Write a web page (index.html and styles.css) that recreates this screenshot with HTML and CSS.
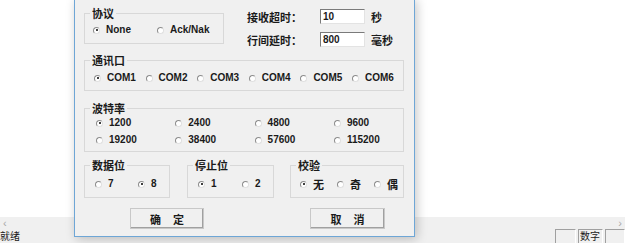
FILE: index.html
```html
<!DOCTYPE html>
<html lang="zh-CN">
<head>
    <meta charset="UTF-8">
    <title>串口设置</title>
    <link rel="stylesheet" href="styles.css">
</head>
<body>
    <div class="window">
        <div class="client"></div>
        <div class="hscroll">
            <span class="arrow">&lsaquo;</span>
            <span class="arrow">&rsaquo;</span>
        </div>
        <div class="statusbar">
            <span class="status-text">就绪</span>
            <div class="panes">
                <span class="pane pane-a"></span>
                <span class="pane pane-b">数字</span>
                <span class="pane pane-c"></span>
            </div>
        </div>

        <div class="dialog">
            <div class="row-top">
                <div class="group g-proto">
                    <div class="group-title">协议</div>
                    <div class="options">
                        <label class="opt"><span class="radio on"></span>None</label>
                        <label class="opt"><span class="radio"></span>Ack/Nak</label>
                    </div>
                </div>
                <div class="timing">
                    <div class="field">
                        <span class="field-label">接收超时：</span>
                        <span class="edit">10</span>
                        <span class="unit">秒</span>
                    </div>
                    <div class="field">
                        <span class="field-label">行间延时：</span>
                        <span class="edit">800</span>
                        <span class="unit">毫秒</span>
                    </div>
                </div>
            </div>

            <div class="group g-port">
                <div class="group-title">通讯口</div>
                <div class="options">
                    <label class="opt"><span class="radio on"></span>COM1</label>
                    <label class="opt"><span class="radio"></span>COM2</label>
                    <label class="opt"><span class="radio"></span>COM3</label>
                    <label class="opt"><span class="radio"></span>COM4</label>
                    <label class="opt"><span class="radio"></span>COM5</label>
                    <label class="opt"><span class="radio"></span>COM6</label>
                </div>
            </div>

            <div class="group g-baud">
                <div class="group-title">波特率</div>
                <div class="options">
                    <label class="opt"><span class="radio on"></span>1200</label>
                    <label class="opt"><span class="radio"></span>2400</label>
                    <label class="opt"><span class="radio"></span>4800</label>
                    <label class="opt"><span class="radio"></span>9600</label>
                    <label class="opt"><span class="radio"></span>19200</label>
                    <label class="opt"><span class="radio"></span>38400</label>
                    <label class="opt"><span class="radio"></span>57600</label>
                    <label class="opt"><span class="radio"></span>115200</label>
                </div>
            </div>

            <div class="row-bits">
                <div class="group g-data">
                    <div class="group-title">数据位</div>
                    <div class="options">
                        <label class="opt"><span class="radio"></span>7</label>
                        <label class="opt"><span class="radio on"></span>8</label>
                    </div>
                </div>
                <div class="group g-stop">
                    <div class="group-title">停止位</div>
                    <div class="options">
                        <label class="opt"><span class="radio on"></span>1</label>
                        <label class="opt"><span class="radio"></span>2</label>
                    </div>
                </div>
                <div class="group g-parity">
                    <div class="group-title">校验</div>
                    <div class="options">
                        <label class="opt cn"><span class="radio on"></span>无</label>
                        <label class="opt cn"><span class="radio"></span>奇</label>
                        <label class="opt cn"><span class="radio"></span>偶</label>
                    </div>
                </div>
            </div>

            <div class="buttons">
                <button class="btn btn-ok"><span>确</span><span>定</span></button>
                <button class="btn btn-cancel"><span>取</span><span>消</span></button>
            </div>
        </div>
    </div>
</body>
</html>
```

FILE: styles.css
```css
:root {
    --face: #f0f0f0;
    --line: #d8d8d8;
    --text: #1a1a1a;
    --accent: #6ea6d6;
}

* {
    margin: 0;
    padding: 0;
    box-sizing: border-box;
}

body {
    background: #fff;
    overflow: hidden;
    font-family: "Liberation Sans", "Noto Sans CJK SC", sans-serif;
    font-size: 11px;
    color: var(--text);
}

.window {
    position: relative;
    width: 625px;
    height: 243px;
    overflow: hidden;
    display: flex;
    flex-direction: column;
}

.client {
    height: 217px;
    flex: none;
    background: #fff;
}

.hscroll {
    height: 12px;
    flex: none;
    background: #f0f0f0;
    display: flex;
    justify-content: space-between;
    align-items: center;
    padding: 0 3px;
}

.hscroll .arrow {
    color: #a8a8a8;
    font-size: 11px;
    line-height: 12px;
}

.statusbar {
    height: 14px;
    flex: none;
    background: var(--face);
    display: flex;
    justify-content: space-between;
    align-items: center;
}

.status-text {
    font-size: 10px;
    font-family: "Noto Sans CJK SC", sans-serif;
    line-height: 14px;
}

.panes {
    display: flex;
    gap: 2px;
    align-self: stretch;
}

.pane {
    height: 14px;
    border-top: 1px solid #a0a0a0;
    border-left: 1px solid #a0a0a0;
    border-right: 1px solid #fff;
    font-size: 10px;
    font-family: "Noto Sans CJK SC", sans-serif;
    line-height: 12px;
    padding-left: 1px;
    white-space: nowrap;
}

.pane-a { width: 21px; }
.pane-b { width: 25px; }
.pane-c { width: 20px; }

/* dialog */
.dialog {
    position: absolute;
    left: 74px;
    top: -2px;
    width: 341px;
    height: 239px;
    background: var(--face);
    border: 1px solid var(--accent);
    box-shadow: 2px 2px 10px rgba(0, 0, 0, 0.22);
    padding: 0 10px 0 9px;
    z-index: 2;
}

.row-top {
    display: flex;
    height: 48px;
}

.group {
    border: 1px solid var(--line);
}

.group-title {
    display: block;
    width: fit-content;
    height: 13px;
    margin: -7px 0 0 5px;
    padding: 0 2px;
    background: var(--face);
    font-family: "Noto Sans CJK SC", sans-serif;
    font-size: 11px;
    font-weight: 700;
    line-height: 13px;
}

.options {
    display: grid;
}

.opt {
    display: flex;
    align-items: center;
    gap: 6px;
    height: 12px;
    font-size: 10px;
    font-weight: 700;
    line-height: 12px;
    white-space: nowrap;
}

.opt.cn {
    font-family: "Noto Sans CJK SC", sans-serif;
    font-size: 11px;
}

.radio {
    position: relative;
    flex: none;
    width: 7px;
    height: 7px;
    border-radius: 50%;
    border: 1px solid;
    border-color: #8c8c8c #e0e0e0 #e0e0e0 #8c8c8c;
    background: #fff;
}

.radio.on::after {
    content: "";
    position: absolute;
    left: 1.5px;
    top: 1.5px;
    width: 2px;
    height: 2px;
    border-radius: 50%;
    background: #000;
}

.g-proto {
    width: 140px;
    height: 31px;
    margin-top: 14px;
}

.g-proto .options {
    grid-template-columns: 64px 64px;
    padding: 4px 0 0 8px;
}

.timing {
    margin: 10px 0 0 23px;
    display: flex;
    flex-direction: column;
    gap: 8px;
}

.field {
    display: flex;
    align-items: center;
    height: 15px;
}

.field-label {
    width: 73px;
    font-family: "Noto Sans CJK SC", sans-serif;
    font-size: 11px;
    font-weight: 700;
}

.edit {
    width: 45px;
    height: 15px;
    background: #fff;
    border: 1px solid;
    border-color: #7a7a7a #e3e3e3 #e3e3e3 #7a7a7a;
    font-size: 10px;
    font-weight: 700;
    line-height: 13px;
    padding-left: 2px;
}

.unit {
    margin-left: 6px;
    font-family: "Noto Sans CJK SC", sans-serif;
    font-size: 11px;
    font-weight: 700;
}

.g-port {
    width: 320px;
    height: 31px;
    margin-top: 13px;
}

.g-port .options {
    grid-template-columns: repeat(6, 51.6px);
    padding: 5px 0 0 9px;
}

.g-baud {
    width: 320px;
    height: 44px;
    margin-top: 17px;
}

.g-baud .options {
    grid-template-columns: repeat(4, 79.3px);
    row-gap: 5px;
    padding: 2px 0 0 11px;
}

.row-bits {
    display: flex;
    margin-top: 13px;
}

.row-bits .options {
    padding-top: 6px;
}

.g-data {
    width: 86px;
    height: 33px;
}

.g-data .options {
    grid-template-columns: 43px 30px;
    padding-left: 10px;
}

.g-stop {
    width: 87px;
    height: 33px;
    margin-left: 17px;
}

.g-stop .options {
    grid-template-columns: 44px 30px;
    padding-left: 10px;
}

.g-parity {
    width: 114px;
    height: 33px;
    margin-left: 16px;
}

.g-parity .options {
    grid-template-columns: 37px 37px 30px;
    padding-left: 9px;
}

.buttons {
    display: flex;
    margin-top: 10px;
    padding-left: 46px;
    gap: 106px;
}

.btn {
    display: flex;
    justify-content: center;
    align-items: center;
    gap: 12px;
    width: 74px;
    height: 21px;
    background: var(--face);
    border: 1px solid;
    border-color: #fff #5a5a5a #5a5a5a #fff;
    box-shadow: inset -1px -1px 0 #a0a0a0;
    outline: 1px solid #c8c8c8;
    outline-offset: -1px;
    font-family: "Noto Sans CJK SC", sans-serif;
    font-size: 11px;
    font-weight: 700;
    color: var(--text);
    cursor: pointer;
}

.btn-cancel {
    width: 75px;
}
```
